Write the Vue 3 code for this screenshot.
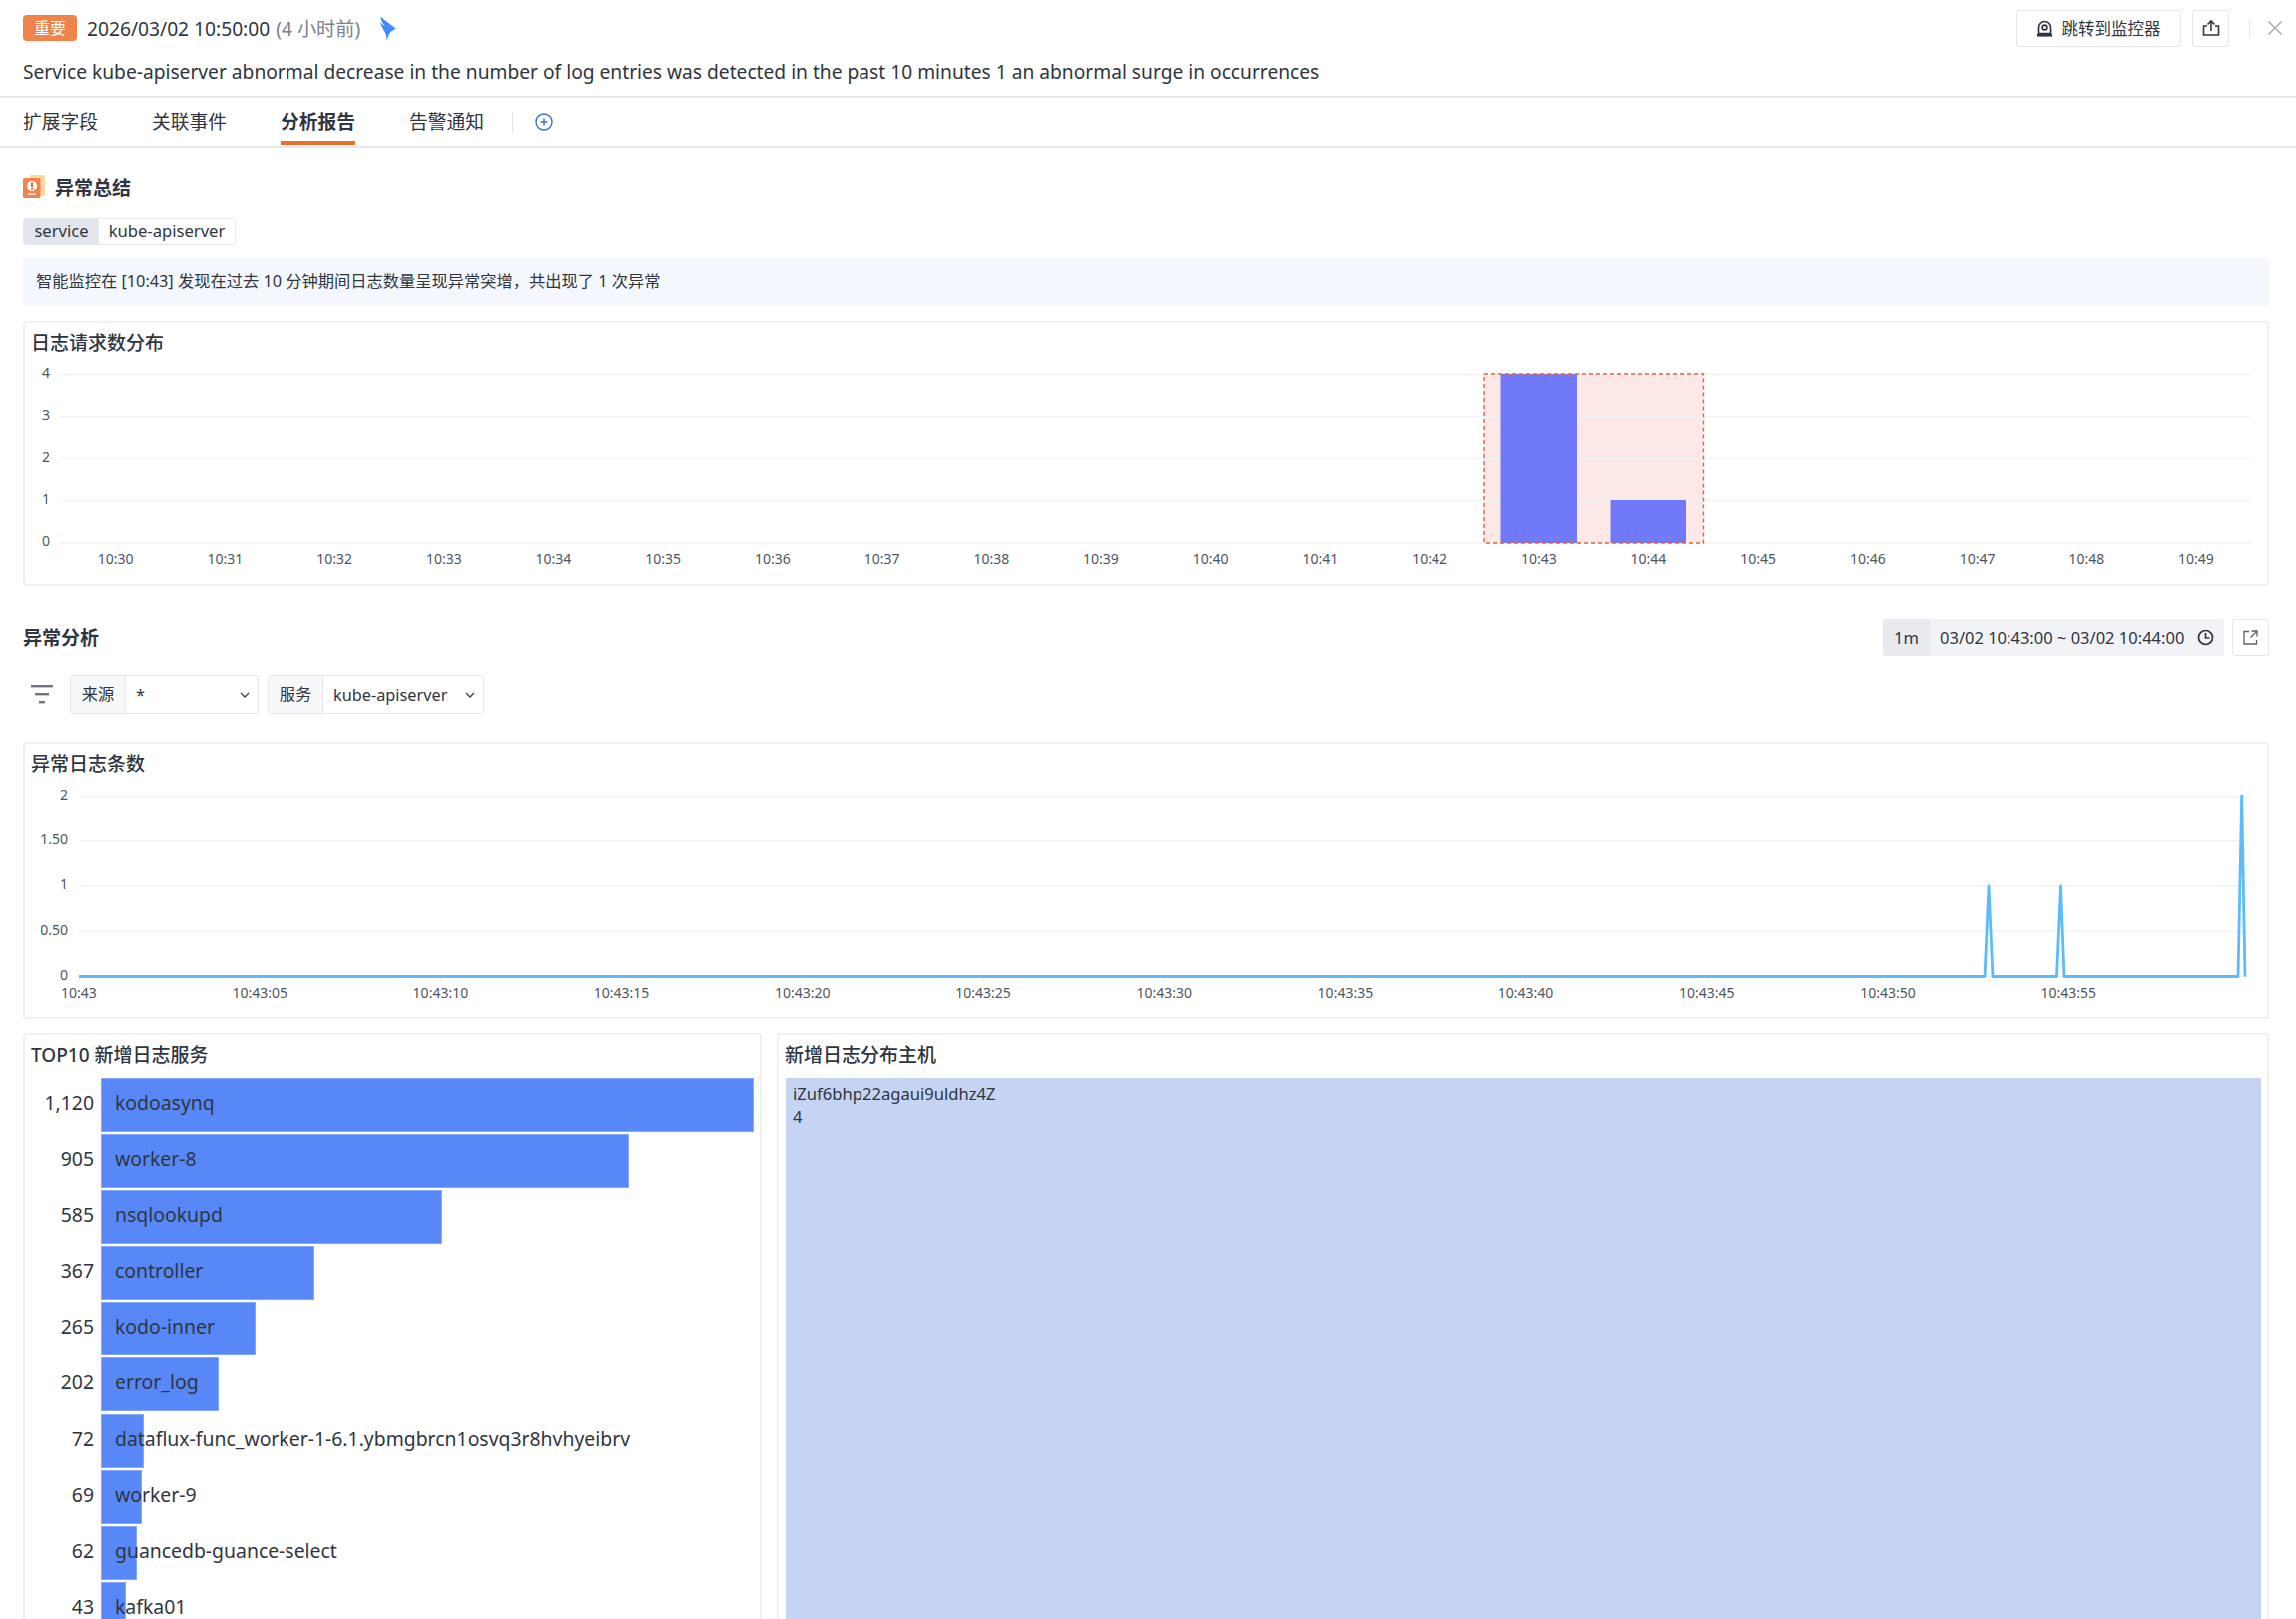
<template>
  <div class="page">
    <div class="head">
      <div class="head-row">
        <span class="badge">重要</span>
        <span class="time">2026/03/02 10:50:00</span>
        <span class="ago">(4 小时前)</span>
        <svg class="bird" width="17" height="25" viewBox="0 0 17 25">
          <path d="M1.5 0.5C5 4 11 8 16.5 12.5L11.5 16 10 18 7.5 24.5C7.5 20 6.5 17 5 15 3 12 1.5 8 1 6 2.5 8 4 9 6 10 3 7 1.5 4 1.5 .5Z" fill="#3f8cf5" />
        </svg>
        <div class="head-right">
          <button class="btn jump">
            <svg width="15" height="17" viewBox="0 0 15 17">
              <path d="M1.5 13.5V7.5a6 6 0 0 1 12 0v6Z" fill="none" stroke="#2f3540" stroke-width="1.7" />
              <circle cx="7.5" cy="7.5" r="2.4" fill="none" stroke="#2f3540" stroke-width="1.6" />
              <rect x="0" y="14" width="15" height="2.6" fill="#2f3540" />
            </svg>
            跳转到监控器
          </button>
          <button class="btn share">
            <svg width="18" height="18" viewBox="0 0 18 18" fill="none" stroke="#2f3540" stroke-width="1.6">
              <path d="M5 7H1.5v9h15V7H13" />
              <path d="M9 12V2M5.5 5.5 9 2l3.5 3.5" />
            </svg>
          </button>
          <i class="sep"></i>
          <svg class="close" width="14" height="14" viewBox="0 0 14 14" stroke="#9a9fa8" stroke-width="1.2">
            <path d="M0.5 0.5l13 13M13.5 0.5l-13 13" />
          </svg>
        </div>
      </div>
      <div class="subject">Service kube-apiserver abnormal decrease in the number of log entries was detected in the past 10 minutes 1 an abnormal surge in occurrences</div>
    </div>

    <div class="tabs">
      <span v-for="t in tabs" :key="t" class="tab" :class="{ active: t === '分析报告' }">{{ t }}</span>
      <i class="tab-sep"></i>
      <svg width="18" height="18" viewBox="0 0 18 18" fill="none" stroke="#3b6fd8" stroke-width="1.4">
        <circle cx="9" cy="9" r="8" />
        <path d="M9 5.5v7M5.5 9h7" />
      </svg>
    </div>

    <div class="body">
      <div class="sec-title">
        <svg width="22" height="23" viewBox="0 0 22 23">
          <rect x="7" y="0" width="15" height="21" rx="1" fill="#fbd9a0" />
          <rect x="0" y="3" width="17.5" height="20" rx="1.5" fill="#f2824f" />
          <circle cx="9" cy="11" r="5" fill="#fff" />
          <rect x="8.1" y="7.5" width="1.8" height="4.5" fill="#e8522f" />
          <rect x="8.1" y="13" width="1.8" height="1.6" fill="#e8522f" />
          <rect x="5" y="18" width="8" height="2" fill="#fbd3bf" />
        </svg>
        <b>异常总结</b>
      </div>
      <div class="tag"><span class="tag-k">service</span><span class="tag-v">kube-apiserver</span></div>
      <div class="info">智能监控在 [10:43] 发现在过去 10 分钟期间日志数量呈现异常突增，共出现了 1 次异常</div>

      <div class="card chart-a">
        <div class="card-title">日志请求数分布</div>
        <svg class="plot" width="2246" height="260" viewBox="25 324 2246 260">
          <rect x="1487" y="375" width="219.5" height="169" fill="#fde8e8" />
          <line v-for="g in gridA" :key="g.y" x1="60" x2="2255" :y1="g.y" :y2="g.y" class="grid" />
          <text v-for="g in gridA" :key="'l' + g.y" x="46" :y="g.y + 3" class="axis" text-anchor="middle">{{ g.label }}</text>
          <rect x="1503.5" y="375" width="76.5" height="169" fill="#7079f9" />
          <rect x="1613.5" y="501" width="75.5" height="43" fill="#7079f9" />
          <rect x="1487" y="375" width="219.5" height="169" fill="none" stroke="#e8603c" stroke-width="1.4" stroke-dasharray="4 3" />
          <text v-for="t in ticksA" :key="t.label" :x="t.x" y="565" class="axis" text-anchor="middle">{{ t.label }}</text>
        </svg>
      </div>

      <div class="an-head">
        <b>异常分析</b>
        <div class="an-right">
          <div class="range">
            <span class="range-k">1m</span>
            <span class="range-v">03/02 10:43:00 ~ 03/02 10:44:00</span>
            <svg width="17" height="17" viewBox="0 0 17 17" fill="none" stroke="#2f3540" stroke-width="1.7">
              <circle cx="8.5" cy="8.5" r="7" />
              <path d="M8.5 4v5h4" />
            </svg>
          </div>
          <button class="btn open">
            <svg width="15" height="15" viewBox="0 0 15 15" fill="none" stroke="#5a606b" stroke-width="1.3">
              <path d="M6 1.5H1v12.5h12.5V10" />
              <path d="M8.5 1h5.5v5.5M14 1 7.5 7.5" />
            </svg>
          </button>
        </div>
      </div>

      <div class="filters">
        <svg class="filter-ico" width="22" height="19" viewBox="0 0 22 19" fill="#6f747c">
          <rect x="0" y="0" width="22" height="2.4" />
          <rect x="4" y="8" width="14" height="2.4" />
          <rect x="8" y="16" width="6" height="2.4" />
        </svg>
        <div class="sel s1"><span class="sel-k">来源</span><span class="sel-v">*</span><svg class="chev" width="10" height="6" viewBox="0 0 10 6" fill="none" stroke="#3a404a" stroke-width="1.3"><path d="M1 1l4 4 4-4" /></svg></div>
        <div class="sel s2"><span class="sel-k">服务</span><span class="sel-v">kube-apiserver</span><svg class="chev" width="10" height="6" viewBox="0 0 10 6" fill="none" stroke="#3a404a" stroke-width="1.3"><path d="M1 1l4 4 4-4" /></svg></div>
      </div>

      <div class="card chart-b">
        <div class="card-title">异常日志条数</div>
        <svg class="plot" width="2246" height="274" viewBox="25 745 2246 274">
          <line v-for="g in gridB" :key="g.y" x1="79" x2="2253" :y1="g.y" :y2="g.y" class="grid" />
          <text v-for="g in gridB" :key="'l' + g.y" x="68" :y="g.y + 3" class="axis" text-anchor="end">{{ g.label }}</text>
          <line v-for="t in ticksB" :key="'t' + t.label" :x1="t.x" :x2="t.x" y1="979" y2="984" class="tick" />
          <text v-for="t in ticksB" :key="t.label" :x="t.x" y="1000" class="axis" text-anchor="middle">{{ t.label }}</text>
          <polyline :points="linePts" fill="none" stroke="#5cbcfb" stroke-width="2.8" stroke-linejoin="round" />
        </svg>
      </div>

      <div class="bottom">
        <div class="card top10">
          <div class="card-title">TOP10 新增日志服务</div>
          <div class="rows">
            <div v-for="r in services" :key="r.name" class="row">
              <span class="val">{{ r.val }}</span>
              <div class="bar-wrap">
                <div class="bar" :style="{ width: r.w + 'px' }"></div>
                <span class="name">{{ r.name }}</span>
              </div>
            </div>
          </div>
        </div>
        <div class="card hosts">
          <div class="card-title">新增日志分布主机</div>
          <div class="tree">iZuf6bhp22agaui9uldhz4Z<br />4</div>
        </div>
      </div>
    </div>
  </div>
</template>

<script setup>
const tabs = ['扩展字段', '关联事件', '分析报告', '告警通知']

const gridA = [
  { y: 375.5, label: '4' },
  { y: 417.5, label: '3' },
  { y: 459.5, label: '2' },
  { y: 501.5, label: '1' },
  { y: 544, label: '0' }
]
const ticksA = Array.from({ length: 20 }, (_, i) => ({
  x: 115.7 + i * 109.7,
  label: '10:' + (30 + i)
}))

const gridB = [
  { y: 797.5, label: '2' },
  { y: 842.5, label: '1.50' },
  { y: 888, label: '1' },
  { y: 933.5, label: '0.50' },
  { y: 978.5, label: '0' }
]
const ticksB = Array.from({ length: 12 }, (_, i) => ({
  x: 79 + i * 181.2,
  label: i === 0 ? '10:43' : '10:43:' + String(i * 5).padStart(2, '0')
}))
const linePts = '79,978.5 1988,978.5 1992,888 1996,978.5 2060.5,978.5 2064.5,888 2068,978.5 2242,978.5 2245.7,797 2249,978.5'

const services = [
  { val: '1,120', name: 'kodoasynq', w: 654 },
  { val: '905', name: 'worker-8', w: 529 },
  { val: '585', name: 'nsqlookupd', w: 342 },
  { val: '367', name: 'controller', w: 214 },
  { val: '265', name: 'kodo-inner', w: 155 },
  { val: '202', name: 'error_log', w: 118 },
  { val: '72', name: 'dataflux-func_worker-1-6.1.ybmgbrcn1osvq3r8hvhyeibrv', w: 42.5 },
  { val: '69', name: 'worker-9', w: 40.5 },
  { val: '62', name: 'guancedb-guance-select', w: 36 },
  { val: '43', name: 'kafka01', w: 25 }
]
</script>

<style>
html, body { margin: 0; background: #fff; }
</style>

<style scoped>
.page {
  width: 2300px;
  height: 1622px;
  overflow: hidden;
  font-family: "Noto Sans", "Noto Sans CJK SC", sans-serif;
  color: #2f3540;
  font-size: 18px;
  box-sizing: border-box;
}
.head {
  height: 96px;
  padding: 0 23px;
  border-bottom: 2px solid #e6e8ee;
}
.head-row {
  display: flex;
  align-items: center;
  height: 56px;
}
.badge {
  width: 54px;
  height: 26px;
  background: #f0834a;
  border-radius: 4px;
  color: #fff;
  font-size: 16px;
  line-height: 26px;
  text-align: center;
  margin-right: 10px;
}
.time { font-size: 19.2px; }
.ago { font-size: 19.2px; color: #7d828b; margin-left: 6px; }
.bird { margin-left: 19px; }
.head-right {
  margin-left: auto;
  display: flex;
  align-items: center;
  margin-right: -9px;
}
.btn {
  display: flex;
  align-items: center;
  justify-content: center;
  background: #fff;
  border: 1px solid #e4e6ea;
  border-radius: 3px;
  color: #2f3540;
  font: inherit;
  padding: 0;
  box-sizing: border-box;
}
.jump { width: 165px; height: 37px; font-size: 16.5px; gap: 10px; }
.share { width: 37px; height: 37px; margin-left: 11px; }
.sep { width: 1px; height: 19px; background: #e0e2e6; margin-left: 20px; }
.close { margin-left: 18px; }
.subject { font-size: 19.2px; line-height: 26px; margin-top: 3px; white-space: nowrap; }
.tabs {
  height: 48px;
  padding: 0 23px;
  display: flex;
  align-items: center;
  border-bottom: 2px solid #e6e8ee;
}
.tab {
  font-size: 18.75px;
  line-height: 47px;
  height: 47px;
  align-self: flex-start;
  margin-right: 54px;
  box-sizing: border-box;
  white-space: nowrap;
}
.tab.active {
  font-weight: 700;
  border-bottom: 4px solid #ec6e2f;
}
.tab-sep {
  width: 1px;
  height: 21px;
  background: #dfe1e6;
  margin: 0 22px 0 -26px;
}
.body { padding: 0 27px 0 23px; }
.sec-title {
  display: flex;
  align-items: center;
  gap: 10px;
  height: 23px;
  margin-top: 27px;
  font-size: 19px;
}
.tag {
  display: inline-flex;
  height: 27px;
  margin-top: 20px;
  border: 1px solid #e6e8ee;
  border-radius: 3px;
  box-sizing: border-box;
  font-size: 16.6px;
  line-height: 24px;
  vertical-align: top;
}
.tag-k { width: 75px; background: #e3e6ee; text-align: center; }
.tag-v { width: 136px; text-align: center; }
.info {
  height: 49px;
  margin-top: 13px;
  padding-left: 13px;
  background: #f4f7fd;
  font-size: 16.25px;
  line-height: 49px;
}
.card {
  border: 2px solid #eef0f3;
  border-radius: 3px;
  box-sizing: border-box;
}
.card-title {
  font-size: 19px;
  font-weight: 500;
  line-height: 26px;
  padding-left: 6px;
  padding-top: 7px;
}
.chart-a { height: 265px; margin-top: 14.5px; position: relative; }
.chart-b { height: 278px; margin-top: 28px; position: relative; }
.plot { position: absolute; left: 0; top: 0; display: block; }
.grid { stroke: #f1f2f4; stroke-width: 1.5; }
.tick { stroke: #e8eaee; stroke-width: 1; }
.axis { font-size: 14px; fill: #4f555e; font-family: "Noto Sans", sans-serif; }
.an-head {
  display: flex;
  align-items: center;
  justify-content: space-between;
  height: 37px;
  margin-top: 33.5px;
  font-size: 19px;
}
.an-head b { margin-top: -2px; }
.an-right { display: flex; align-items: center; gap: 8px; }
.range {
  display: flex;
  align-items: center;
  width: 342px;
  height: 37px;
  background: #f1f3f6;
  border-radius: 3px;
  font-size: 16.5px;
}
.range-k {
  width: 47px;
  height: 37px;
  line-height: 37px;
  text-align: center;
  background: #e8eaef;
  border-radius: 3px 0 0 3px;
}
.range-v { margin: 0 13px 0 10px; white-space: nowrap; }
.open { width: 37px; height: 37px; }
.filters {
  display: flex;
  align-items: center;
  gap: 9px;
  height: 39px;
  margin-top: 19px;
}
.filter-ico { margin: 0 8px 0 8px; }
.sel {
  display: flex;
  align-items: center;
  height: 39px;
  border: 1px solid #e4e6ea;
  border-radius: 3px;
  box-sizing: border-box;
  font-size: 16.3px;
}
.s1 { width: 189px; }
.s2 { width: 217px; }
.sel-k {
  width: 54px;
  height: 37px;
  line-height: 37px;
  text-align: center;
  background: #f7f8fa;
  border-right: 1px solid #e4e6ea;
}
.sel-v { padding-left: 10px; }
.chev { margin-left: auto; margin-right: 8px; }
.bottom {
  display: grid;
  grid-template-columns: 740px 1fr;
  gap: 15px;
  margin-top: 14px;
  height: 700px;
}
.rows { padding: 10px 6px 0 0; }
.row { display: flex; height: 56.1px; }
.val {
  width: 76px;
  flex: none;
  text-align: right;
  font-size: 19.4px;
  line-height: 49px;
  padding-right: 7px;
  box-sizing: border-box;
}
.bar-wrap { position: relative; flex: 1; }
.bar {
  height: 54px;
  background: #5888f8;
  border: 1px solid #85a6fa;
  box-sizing: border-box;
}
.name {
  position: absolute;
  left: 14px;
  top: 0;
  font-size: 19.4px;
  line-height: 49px;
  white-space: nowrap;
}
.tree {
  margin: 10px 6px 0 7px;
  height: 600px;
  padding: 4px 7px;
  background: #c5d4f3;
  font-size: 16.6px;
  line-height: 23px;
}
</style>
